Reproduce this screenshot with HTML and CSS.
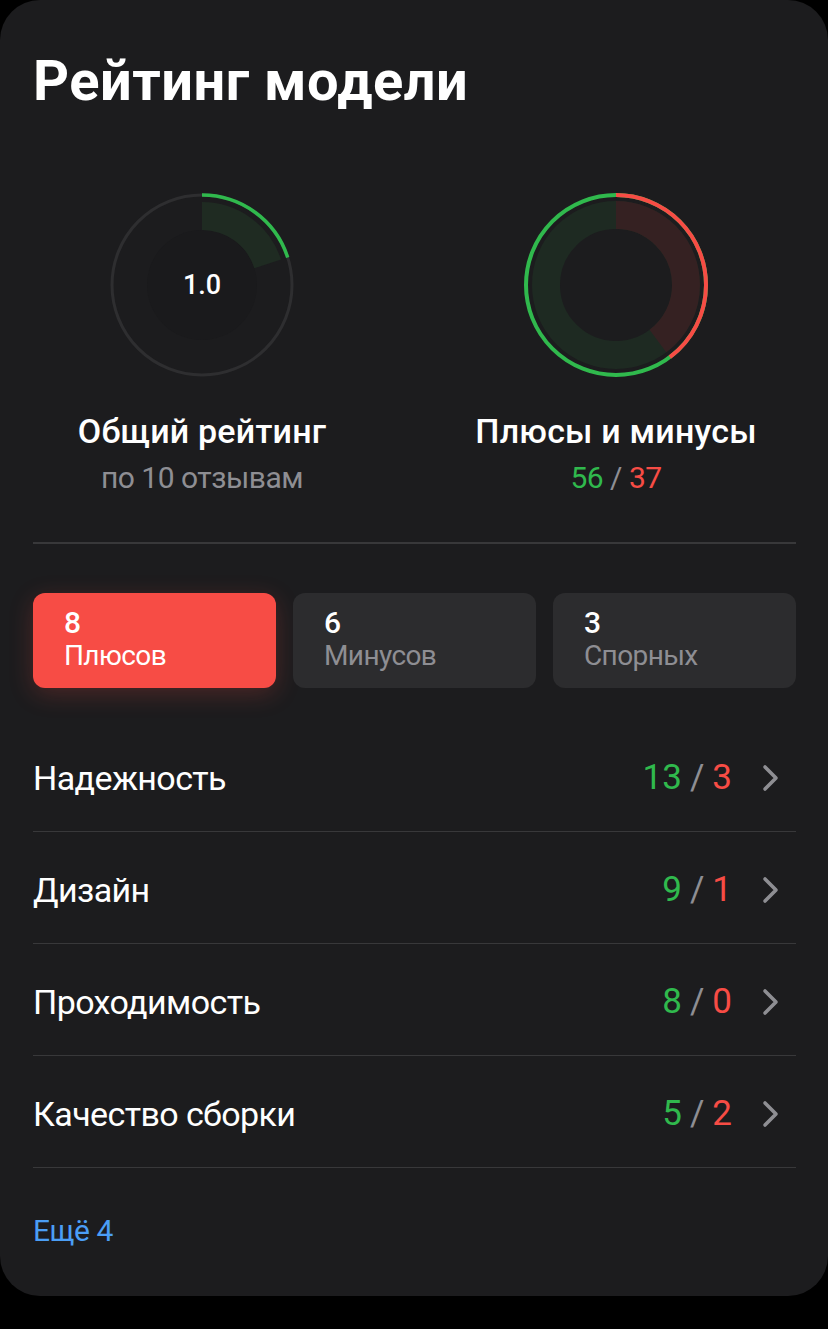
FILE: index.html
```html
<!DOCTYPE html>
<html lang="ru">
<head>
<meta charset="utf-8">
<title>Рейтинг модели</title>
<link rel="stylesheet" href="styles.css">
</head>
<body>
<div class="card">
  <h1 class="title">Рейтинг модели</h1>

  <div class="gauges">
    <div class="gauge">
      <div class="gauge-chart">
        <svg width="200" height="200" viewBox="0 0 200 200">
          <circle cx="100" cy="100" r="90" fill="none" stroke="#2e2e30" stroke-width="3"/>
          <circle cx="100" cy="100" r="55" fill="#1a1a1c"/>
          <circle cx="100" cy="100" r="69" fill="none" stroke="#1f2b22" stroke-width="28" stroke-dasharray="86.7 400" transform="rotate(-90 100 100)"/>
          <circle cx="100" cy="100" r="90" fill="none" stroke="#30b94d" stroke-width="3.5" stroke-dasharray="113.1 500" transform="rotate(-90 100 100)"/>
        </svg>
        <span class="gauge-value">1.0</span>
      </div>
      <div class="gauge-label">Общий рейтинг</div>
      <div class="gauge-sub">по 10 отзывам</div>
    </div>
    <div class="gauge">
      <div class="gauge-chart">
        <svg width="200" height="200" viewBox="0 0 200 200">
          <circle cx="100" cy="100" r="70" fill="none" stroke="#1e2a22" stroke-width="28"/>
          <circle cx="100" cy="100" r="70" fill="none" stroke="#352122" stroke-width="28" stroke-dasharray="174.7 300" transform="rotate(-90 100 100)"/>
          <circle cx="100" cy="100" r="90" fill="none" stroke="#30b94d" stroke-width="4"/>
          <circle cx="100" cy="100" r="90" fill="none" stroke="#f74c45" stroke-width="4" stroke-dasharray="224.6 600" transform="rotate(-90 100 100)"/>
        </svg>
      </div>
      <div class="gauge-label">Плюсы и минусы</div>
      <div class="gauge-sub"><span class="pos">56</span> / <span class="neg">37</span></div>
    </div>
  </div>

  <div class="divider"></div>

  <div class="tabs">
    <div class="tab tab-active">
      <span class="tab-num">8</span>
      <span class="tab-label">Плюсов</span>
    </div>
    <div class="tab">
      <span class="tab-num">6</span>
      <span class="tab-label">Минусов</span>
    </div>
    <div class="tab">
      <span class="tab-num">3</span>
      <span class="tab-label">Спорных</span>
    </div>
  </div>

  <ul class="list">
    <li class="row">
      <span class="row-name">Надежность</span>
      <span class="row-score"><span class="pos">13</span><span class="slash">/</span><span class="neg">3</span></span>
      <svg class="chev" width="18" height="28" viewBox="0 0 18 28"><path d="M3 3 L14 14 L3 25" fill="none" stroke="#8e8e93" stroke-width="3.6" stroke-linecap="round" stroke-linejoin="round"/></svg>
    </li>
    <li class="row">
      <span class="row-name">Дизайн</span>
      <span class="row-score"><span class="pos">9</span><span class="slash">/</span><span class="neg">1</span></span>
      <svg class="chev" width="18" height="28" viewBox="0 0 18 28"><path d="M3 3 L14 14 L3 25" fill="none" stroke="#8e8e93" stroke-width="3.6" stroke-linecap="round" stroke-linejoin="round"/></svg>
    </li>
    <li class="row">
      <span class="row-name">Проходимость</span>
      <span class="row-score"><span class="pos">8</span><span class="slash">/</span><span class="neg">0</span></span>
      <svg class="chev" width="18" height="28" viewBox="0 0 18 28"><path d="M3 3 L14 14 L3 25" fill="none" stroke="#8e8e93" stroke-width="3.6" stroke-linecap="round" stroke-linejoin="round"/></svg>
    </li>
    <li class="row">
      <span class="row-name">Качество сборки</span>
      <span class="row-score"><span class="pos">5</span><span class="slash">/</span><span class="neg">2</span></span>
      <svg class="chev" width="18" height="28" viewBox="0 0 18 28"><path d="M3 3 L14 14 L3 25" fill="none" stroke="#8e8e93" stroke-width="3.6" stroke-linecap="round" stroke-linejoin="round"/></svg>
    </li>
  </ul>

  <a class="more" href="#">Ещё 4</a>
</div>
</body>
</html>
```

FILE: styles.css
```css
* { box-sizing: border-box; }

html, body {
  margin: 0;
  padding: 0;
  background: #000;
}

body {
  font-family: Roboto, "Noto Sans", sans-serif;
  color: #fff;
}

.card {
  width: 828px;
  height: 1296px;
  background: #1c1c1e;
  border-radius: 40px;
  padding: 53px 32px 0 33px;
}

.title {
  margin: 0;
  font-size: 56px;
  line-height: 56px;
  font-weight: 700;
  letter-spacing: 0.5px;
}

.gauges {
  display: grid;
  grid-template-columns: 404px 424px;
  margin: 76px -32px 0 -33px;
}

.gauge {
  display: flex;
  flex-direction: column;
  align-items: center;
}

.gauge-chart {
  position: relative;
  width: 200px;
  height: 200px;
}

.gauge-chart svg { display: block; }

.gauge-value {
  position: absolute;
  inset: 0;
  display: flex;
  align-items: center;
  justify-content: center;
  font-size: 27px;
  font-weight: 500;
}

.gauge-label {
  margin-top: 26px;
  font-size: 34px;
  line-height: 40px;
  font-weight: 500;
  letter-spacing: 0.2px;
}

.gauge-sub {
  margin-top: 9px;
  font-size: 30px;
  line-height: 36px;
  color: #8e8e93;
  letter-spacing: -0.5px;
}

.pos { color: #30b94d; }
.neg { color: #f74c45; }

.divider {
  height: 2px;
  background: #38383a;
  margin-top: 46px;
}

.tabs {
  display: grid;
  grid-template-columns: repeat(3, 1fr);
  gap: 17px;
  margin-top: 49px;
}

.tab {
  height: 95px;
  border-radius: 12px;
  background: #2c2c2e;
  padding: 13px 31px 0;
  display: flex;
  flex-direction: column;
}

.tab-active {
  background: #f74c45;
  box-shadow: 0 6px 24px rgba(247, 76, 69, 0.22);
}

.tab-num {
  font-size: 30px;
  line-height: 34px;
  font-weight: 500;
}

.tab-label {
  font-size: 28px;
  line-height: 32px;
  color: #8e8e93;
  letter-spacing: -0.6px;
}

.tab-active .tab-label { color: #fff; }

.list {
  list-style: none;
  margin: 32px 0 0;
  padding: 0;
}

.row {
  height: 112px;
  border-bottom: 1.5px solid #38383a;
  display: flex;
  align-items: center;
  padding: 5px 16px 0 0;
}

.row-name {
  flex: 1;
  font-size: 34px;
  line-height: 40px;
  letter-spacing: -0.6px;
}

.row-score {
  font-size: 35px;
  line-height: 40px;
}

.slash {
  color: #8e8e93;
  margin: 0 8px;
}

.chev {
  margin-left: 30px;
  display: block;
}

.more {
  display: block;
  margin-top: 45px;
  font-size: 30px;
  line-height: 36px;
  color: #4b9ef5;
  text-decoration: none;
  letter-spacing: -0.5px;
}
```
